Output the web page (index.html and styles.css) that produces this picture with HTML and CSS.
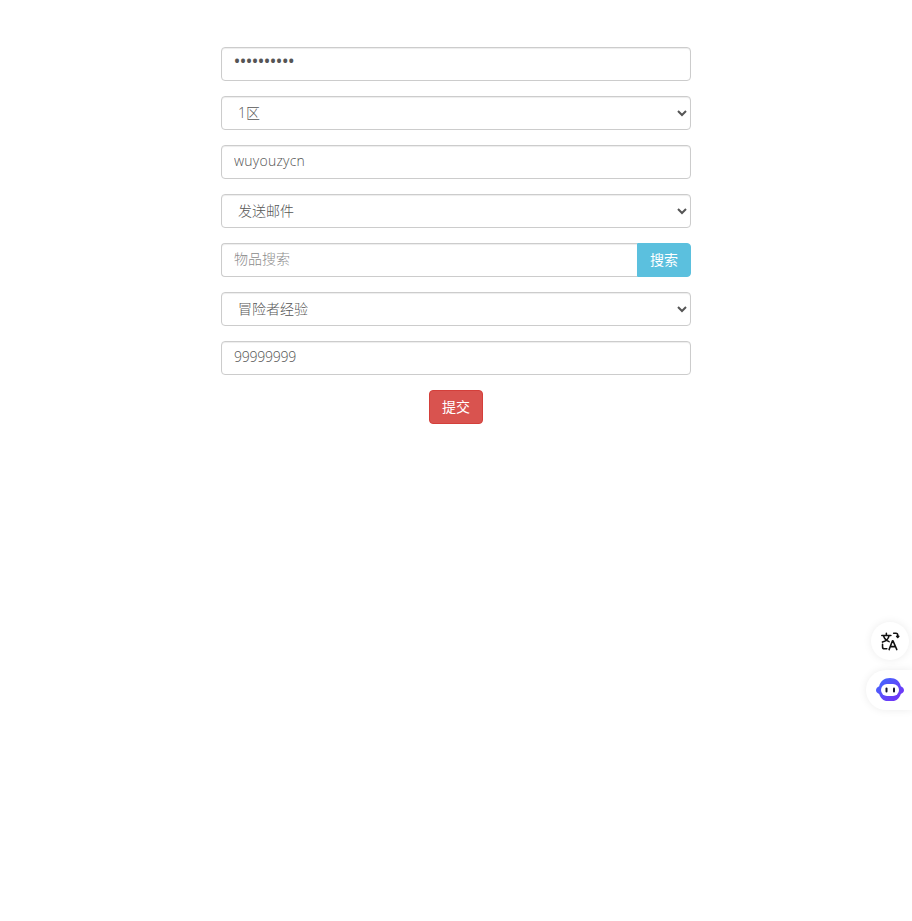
FILE: index.html
```html
<!DOCTYPE html>
<html lang="zh">
<head>
<meta charset="utf-8">
<title>表单</title>
<link rel="stylesheet" href="styles.css">
</head>
<body>
<form class="form">
  <input class="control password" type="password" value="wuyouzycn1">
  <select class="control"><option>1区</option></select>
  <input class="control latin" type="text" value="wuyouzycn">
  <select class="control"><option>发送邮件</option></select>
  <div class="search">
    <input class="control search-input" type="text" placeholder="物品搜索">
    <button class="btn btn-info" type="button">搜索</button>
  </div>
  <select class="control"><option>冒险者经验</option></select>
  <input class="control digits" type="text" value="99999999">
  <div class="submit-row"><button class="btn btn-danger" type="button">提交</button></div>
</form>
<aside class="floats">
  <div class="float-translate">
    <svg width="20" height="20" viewBox="0 0 22 22" fill="none" stroke="#111" stroke-width="1.700" stroke-linecap="round" stroke-linejoin="round">
      <path d="M2 5h10M7 2.500V5M10 5c-.7 3.400-3.300 6-7.300 7.200M4 5.500c.8 2.800 3 5 6 6.200"/>
      <path d="M10 20.500l3.700-9.700h.6L18.500 20.500M11.500 17.200h5.500"/>
      <path d="M15 2.500h2.500a2 2 0 0 1 2 2v2.500M18.300 5.800l1.200 1.300 1.200-1.300"/>
      <path d="M2.800 14.500v3a2 2 0 0 0 2 2h2.700"/>
    </svg>
  </div>
  <div class="float-bot">
    <svg width="28" height="23" viewBox="0 0 28 23">
      <defs><linearGradient id="bot" x1="0" y1="0" x2="1" y2="1"><stop offset="0" stop-color="#3d6cff"/><stop offset="1" stop-color="#7a2cf5"/></linearGradient></defs>
      <path fill="url(#bot)" d="M14 0c5.700 0 10 3.500 10.800 8.300C26.600 9 28 10.500 28 12.200s-1.400 3.100-3.200 3.700c-1.200 4-4.200 7.100-8.300 7.100h-5c-4.100 0-7.100-3.100-8.300-7.100C1.400 15.300 0 13.900 0 12.200S1.400 9 3.200 8.300C4 3.500 8.300 0 14 0z"/>
      <rect fill="#fff" x="5" y="6" width="18" height="12" rx="6"/>
      <rect fill="#16162e" x="9.500" y="9.500" width="2" height="5" rx="1"/>
      <rect fill="#16162e" x="17" y="9.500" width="2" height="5" rx="1"/>
    </svg>
  </div>
</aside>
</body>
</html>
```

FILE: styles.css
```css
* { box-sizing: border-box; }
html, body { margin: 0; height: 100%; background: #fff; }
body {
  position: relative;
  padding-top: 47px;
  font-family: "Open Sans", "Noto Sans CJK SC", sans-serif;
  font-weight: 300;
  font-size: 14px;
  line-height: 20px;
  color: #555;
  overflow: hidden;
}
.form { width: 470px; margin: 0 auto; display: flex; flex-direction: column; gap: 15px; }
.control {
  display: block;
  width: 100%;
  height: 34px;
  padding: 4px 12px 8px;
  font: inherit;
  color: #555;
  background: #fff;
  border: 1px solid #ccc;
  border-radius: 4px;
  box-shadow: inset 0 1px 1px rgba(0, 0, 0, .075);
  outline: none;
}
select.control { padding: 5px 12px 7px; }
.control::placeholder { color: #8c8c8c; opacity: 1; }
.password { font-weight: 600; font-size: 16px; padding: 3px 12px 9px; }
.latin { letter-spacing: .22px; }
.digits { letter-spacing: -.25px; }
.search { display: flex; }
.search-input { flex: 1; min-width: 0; border-right: 0; border-radius: 4px 0 0 4px; }
.btn {
  height: 34px;
  padding: 6px 12px;
  font: inherit;
  font-weight: 400;
  color: #fff;
  border: 1px solid transparent;
  cursor: pointer;
  white-space: nowrap;
}
.btn-info { background: #5bc0de; border-color: #5bc0de; border-radius: 0 4px 4px 0; }
.btn-danger { background: #d9534f; border-color: #d43f3a; border-radius: 4px; }
.submit-row { display: flex; justify-content: center; }
.floats { position: absolute; top: 622px; right: 0; width: 46px; height: 88px; }
.float-translate {
  position: absolute;
  top: 0;
  right: 3px;
  width: 38px;
  height: 38px;
  display: flex;
  align-items: center;
  justify-content: center;
  background: #fff;
  border-radius: 50%;
  box-shadow: 0 0 8px rgba(0, 0, 0, .08);
}
.float-bot {
  position: absolute;
  top: 48px;
  right: 0;
  width: 46px;
  height: 40px;
  padding: 8px 0 0 10px;
  background: #fff;
  border-radius: 20px 0 0 20px;
  box-shadow: 0 0 8px rgba(0, 0, 0, .08);
}
```
